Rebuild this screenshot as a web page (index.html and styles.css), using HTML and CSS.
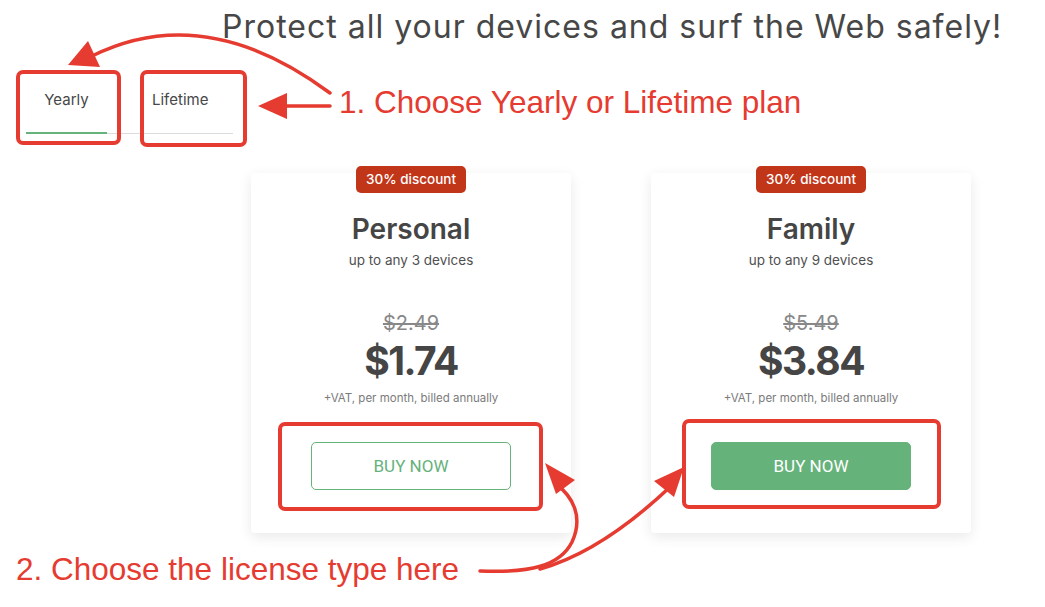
FILE: index.html
```html
<!DOCTYPE html>
<html lang="en">
<head>
<meta charset="utf-8">
<title>Pricing</title>
<link rel="stylesheet" href="styles.css">
</head>
<body>
<div class="page">
  <h1 class="headline">Protect all your devices and surf the Web safely!</h1>
  <div class="tabs">
    <div class="tab tab-active">Yearly</div>
    <div class="tab tab-second">Lifetime</div>
  </div>
  <div class="cards">
    <div class="card">
      <div class="badge">30% discount</div>
      <div class="plan">Personal</div>
      <div class="devices">up to any 3 devices</div>
      <div class="old-price">$2.49</div>
      <div class="price">$1.74</div>
      <div class="terms">+VAT, per month, billed annually</div>
      <div class="btn btn-outline">BUY NOW</div>
    </div>
    <div class="card">
      <div class="badge">30% discount</div>
      <div class="plan">Family</div>
      <div class="devices">up to any 9 devices</div>
      <div class="old-price">$5.49</div>
      <div class="price">$3.84</div>
      <div class="terms">+VAT, per month, billed annually</div>
      <div class="btn btn-solid">BUY NOW</div>
    </div>
  </div>

  <div class="overlay">
    <svg class="marks" width="1045" height="607" viewBox="0 0 1045 607">
      <g fill="none" stroke="#e53b30" stroke-width="4" stroke-linejoin="round">
        <rect x="18" y="72" width="101" height="71" rx="5"/>
        <rect x="142" y="72" width="103" height="73" rx="5"/>
        <rect x="280" y="424" width="261" height="85" rx="5"/>
        <rect x="684" y="421" width="255" height="86" rx="5"/>
      </g>
      <g fill="none" stroke="#e53b30" stroke-width="3.5" stroke-linecap="round">
        <path d="M330,93 Q205,0 92,56"/>
        <path d="M330,106 L282,106"/>
        <path d="M480,571 C530,573 560,566 572,542 C584,516 572,496 556,484"/>
        <path d="M540,569 C590,555 635,520 670,487"/>
      </g>
      <g fill="#e53b30">
        <polygon points="68,65 88,41 100,67"/>
        <polygon points="258,106 287,93 287,119"/>
        <polygon points="545,463 575,480 556,494"/>
        <polygon points="684,467 654,481 674,497"/>
      </g>
    </svg>
    <div class="note note-1">1. Choose Yearly or Lifetime plan</div>
    <div class="note note-2">2. Choose the license type here</div>
  </div>
</div>
</body>
</html>
```

FILE: styles.css
```css
* { box-sizing: border-box; }
html, body { margin: 0; padding: 0; background: #fff; }
body {
  font-family: "Inter", "Open Sans", sans-serif;
  color: #464646;
}
.page {
  position: relative;
  width: 1045px;
  height: 607px;
  overflow: hidden;
}
.headline {
  margin: 0;
  padding: 7px 0 0 222px;
  font-size: 32px;
  font-weight: 400;
  line-height: 40px;
  color: #474747;
  letter-spacing: 1px;
  white-space: nowrap;
}
.tabs {
  display: flex;
  margin: 38px 0 0 26px;
  width: 207px;
  border-bottom: 1px solid #dcdcdc;
}
.tab {
  font-size: 15px;
  line-height: 20px;
  padding: 5px 0 22px;
  color: #474747;
}
.tab-active {
  width: 81px;
  text-align: center;
  border-bottom: 2px solid #66b27b;
  margin-bottom: -1px;
}
.tab-second {
  margin-left: 45px;
}
.cards {
  display: flex;
  gap: 80px;
  margin: 39px 0 0 251px;
}
.card {
  position: relative;
  width: 320px;
  height: 360px;
  background: #fff;
  border-radius: 4px;
  box-shadow: 0 4px 14px rgba(0, 0, 0, 0.09);
  display: flex;
  flex-direction: column;
  align-items: center;
  padding-top: 40px;
}
.badge {
  position: absolute;
  top: -7px;
  left: 105px;
  width: 110px;
  height: 27px;
  border-radius: 5px;
  background: #c13518;
  color: #fff;
  font-size: 13.5px;
  font-weight: 500;
  line-height: 27px;
  text-align: center;
}
.plan {
  font-size: 28px;
  font-weight: 600;
  line-height: 32px;
  color: #454545;
}
.devices {
  margin-top: 6px;
  font-size: 13.5px;
  line-height: 18px;
  color: #505050;
}
.old-price {
  margin-top: 42px;
  font-size: 20px;
  line-height: 24px;
  color: #888;
  text-decoration: line-through;
}
.price {
  margin-top: 3px;
  font-size: 39px;
  font-weight: 700;
  line-height: 46px;
  color: #454545;
  letter-spacing: -1.5px;
}
.terms {
  margin-top: 6px;
  font-size: 11.5px;
  line-height: 16px;
  color: #7b7b7b;
}
.btn {
  margin-top: 36px;
  width: 200px;
  height: 48px;
  border-radius: 5px;
  font-family: "Roboto", "Liberation Sans", sans-serif;
  font-size: 17px;
  line-height: 46px;
  text-align: center;
}
.btn-outline {
  border: 1px solid #66b27b;
  color: #66b27b;
  background: #fff;
}
.btn-solid {
  border: 1px solid #66b27b;
  background: #66b27b;
  color: #fff;
}
.overlay {
  position: absolute;
  left: 0;
  top: 0;
  width: 1045px;
  height: 607px;
  pointer-events: none;
}
.marks {
  position: absolute;
  left: 0;
  top: 0;
}
.note {
  position: absolute;
  font-family: "Liberation Sans", Arial, sans-serif;
  font-size: 31.5px;
  line-height: 34px;
  color: #e53b30;
  white-space: nowrap;
}
.note-1 { left: 339px; top: 85px; }
.note-2 { left: 16px; top: 552px; }
```
